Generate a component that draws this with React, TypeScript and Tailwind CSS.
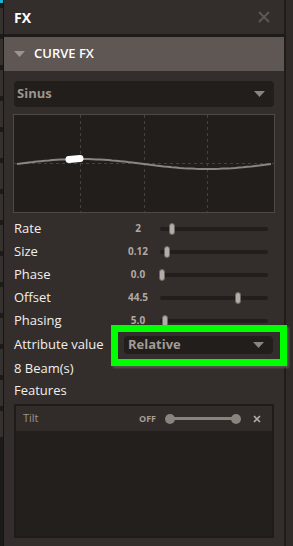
import React from 'react';

const font = { fontFamily: '"Open Sans", "Noto Sans", sans-serif' };

const params = [
  { name: 'Rate', value: '2', left: 9 },
  { name: 'Size', value: '0.12', left: 4 },
  { name: 'Phase', value: '0.0', left: -1 },
  { name: 'Offset', value: '44.5', left: 75 },
  { name: 'Phasing', value: '5.0', left: 2 },
];

function sinePath() {
  const pts: string[] = [];
  for (let i = 0; i <= 64; i++) {
    const x = 3 + (254 * i) / 64;
    const y = 49 - 5 * Math.sin((2 * Math.PI * i) / 64);
    pts.push(`${i === 0 ? 'M' : 'L'}${x.toFixed(1)} ${y.toFixed(1)}`);
  }
  return pts.join(' ');
}

function Caret({ className = '' }: { className?: string }) {
  return (
    <svg width="11" height="6" viewBox="0 0 11 6" className={className}>
      <path d="M0 0 H11 L5.5 6 Z" fill="currentColor" />
    </svg>
  );
}

function Slider({ left }: { left: number }) {
  return (
    <div className="relative ml-[2px] h-[12px] w-[108px] flex items-center">
      <div className="h-[4px] w-full rounded-full bg-[#221e1c]" />
      <div
        className="absolute top-0 h-[12px] w-[6px] rounded-[3px] bg-[#b3ada8] border border-[#6e6864]"
        style={{ left: `${left}px` }}
      />
    </div>
  );
}

export default function App() {
  return (
    <div className="flex h-[546px] w-[293px] bg-[#332e2b] overflow-hidden" style={font}>
      {/* left strip */}
      <div className="flex w-[3px] flex-col bg-[#1d1b1a]">
        <div className="h-[3px] bg-[#19b5d6]" />
        {Array.from({ length: 14 }).map((_, i) => (
          <div key={i} className="mt-[5px] h-[26px] bg-[#35312f]" />
        ))}
      </div>
      <div className="w-px bg-[#151413]" />

      {/* panel */}
      <div className="flex w-[280px] flex-col">
        <div className="flex h-[34px] items-center justify-between pl-[10px] pr-[14px]">
          <span className="text-[14px] font-bold text-white">FX</span>
          <svg width="12" height="12" viewBox="0 0 12 12">
            <path d="M1 1 L11 11 M11 1 L1 11" stroke="#5c5652" strokeWidth="2.2" />
          </svg>
        </div>
        <div className="h-[3px] bg-[#1f1b19]" />
        <div className="flex h-[34px] items-center bg-[#5e5753] pl-[10px] text-[#9a938e]">
          <Caret />
          <span className="ml-[9px] text-[13px] font-semibold text-white">CURVE FX</span>
        </div>

        <div className="flex flex-col px-[10px] pt-[10px]">
          <div className="flex h-[26px] items-center justify-between rounded-[4px] bg-[#221e1c] pl-[3px] pr-[9px] text-[#8a837e]">
            <span className="text-[13px] font-bold text-[#9c948e]">Sinus</span>
            <Caret />
          </div>

          <div className="mt-[7px] -mx-px h-[99px] border border-[#4e4946] bg-[#221e1c]">
            <svg width="260" height="97" viewBox="0 0 260 97">
              <g stroke="#46413e" strokeWidth="1" strokeDasharray="3 3">
                <line x1="66.5" y1="0" x2="66.5" y2="97" />
                <line x1="130.5" y1="0" x2="130.5" y2="97" />
                <line x1="193.5" y1="0" x2="193.5" y2="97" />
                <line x1="0" y1="48.5" x2="260" y2="48.5" />
              </g>
              <path d={sinePath()} fill="none" stroke="#8c8682" strokeWidth="2" />
              <line x1="55" y1="44.5" x2="66" y2="43.5" stroke="#ffffff" strokeWidth="7" strokeLinecap="round" />
            </svg>
          </div>

          <div className="mt-[4px] flex flex-col">
            {params.map((p) => (
              <div key={p.name} className="flex h-[23px] items-center">
                <span className="w-[104px] text-[13px] text-[#f2efec]">{p.name}</span>
                <span className="w-[40px] text-center text-[10px] font-bold text-[#b0a9a3]">{p.value}</span>
                <Slider left={p.left} />
              </div>
            ))}
          </div>

          <div className="flex h-[26px] items-center">
            <span className="w-[110px] text-[13px] text-[#f2efec]">Attribute value</span>
            <div className="relative flex h-[18px] w-[149px] items-center justify-between rounded-[4px] bg-[#221e1c] pl-[4px] pr-[9px] text-[#8a837e]">
              <span className="text-[13px] font-bold text-[#a39b95]">Relative</span>
              <Caret />
              <div className="pointer-events-none absolute -left-[13px] -right-[14px] -top-[11px] -bottom-[12px] border-[7px] border-[#00ff00] shadow-[2px_2px_2px_#5a5552]" />
            </div>
          </div>

          <div className="flex h-[22px] items-center text-[13px] text-[#f2efec]">8 Beam(s)</div>
          <div className="flex h-[22px] items-center text-[13px] text-[#f2efec]">Features</div>

          <div className="mt-[2px] h-[134px] border-2 border-[#1f1b19] bg-[#231f1d]">
            <div className="flex h-[25px] items-center bg-[#312c29] pl-[7px]">
              <span className="w-[116px] text-[11px] text-[#9a938d]">Tilt</span>
              <span className="w-[26px] text-[9px] font-bold text-[#a59e98]">OFF</span>
              <div className="relative flex h-[10px] w-[76px] items-center">
                <div className="mx-[5px] h-[3px] flex-1 bg-[#8a837e]" />
                <div className="absolute left-0 h-[10px] w-[10px] rounded-full bg-[#8a837e]" />
                <div className="absolute right-0 h-[10px] w-[10px] rounded-full bg-[#8a837e]" />
              </div>
              <svg width="8" height="8" viewBox="0 0 8 8" className="ml-[12px]">
                <path d="M1 1 L7 7 M7 1 L1 7" stroke="#b3ada8" strokeWidth="1.6" />
              </svg>
            </div>
          </div>
        </div>
      </div>

      {/* right edge */}
      <div className="w-[2px] bg-[#1f1b19]" />
      <div className="flex-1 bg-[#302b28]" />
    </div>
  );
}
